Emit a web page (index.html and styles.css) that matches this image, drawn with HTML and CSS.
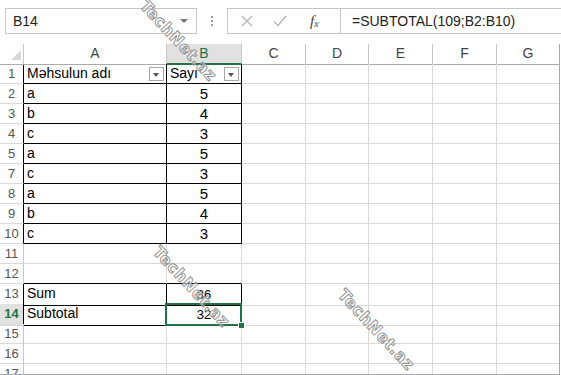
FILE: index.html
```html
<!DOCTYPE html>
<html lang="az">
<head>
<meta charset="UTF-8">
<meta name="viewport" content="width=device-width, initial-scale=1.0">
<title>SUBTOTAL</title>
<link rel="stylesheet" href="styles.css">
</head>
<body>
<div class="app">
  <div class="formula-row">
    <div class="name-box">
      <span>B14</span>
      <span class="caret"></span>
    </div>
    <div class="grip"><i></i><i></i><i></i></div>
    <div class="fx-buttons">
      <svg class="btn-icon" width="12" height="12" viewBox="0 0 12 12"><path d="M1 1L11 11M11 1L1 11" stroke="#b4b4b4" stroke-width="1.3" fill="none"/></svg>
      <svg class="btn-icon" width="14" height="12" viewBox="0 0 14 12"><path d="M1 6.5L5 10.5L13 1" stroke="#b4b4b4" stroke-width="1.3" fill="none"/></svg>
      <span class="fx">f<sub>x</sub></span>
    </div>
    <div class="formula">=SUBTOTAL(109;B2:B10)</div>
  </div>

  <div class="sheet">
    <div class="row head">
      <div class="corner"><span class="tri"></span></div>
      <div class="ch">A</div>
      <div class="ch active">B</div>
      <div class="ch">C</div>
      <div class="ch">D</div>
      <div class="ch">E</div>
      <div class="ch">F</div>
      <div class="ch last">G</div>
    </div>

    <div class="row">
      <div class="rh edge">1</div>
      <div class="c box filter"><span>Məhsulun adı</span><span class="drop"></span></div>
      <div class="c box filter"><span>Sayı</span><span class="drop"></span></div>
      <div class="c"></div><div class="c"></div><div class="c"></div><div class="c"></div><div class="c last"></div>
    </div>
    <div class="row">
      <div class="rh edge">2</div>
      <div class="c box">a</div><div class="c box num">5</div>
      <div class="c"></div><div class="c"></div><div class="c"></div><div class="c"></div><div class="c last"></div>
    </div>
    <div class="row">
      <div class="rh edge">3</div>
      <div class="c box">b</div><div class="c box num">4</div>
      <div class="c"></div><div class="c"></div><div class="c"></div><div class="c"></div><div class="c last"></div>
    </div>
    <div class="row">
      <div class="rh edge">4</div>
      <div class="c box">c</div><div class="c box num">3</div>
      <div class="c"></div><div class="c"></div><div class="c"></div><div class="c"></div><div class="c last"></div>
    </div>
    <div class="row">
      <div class="rh edge">5</div>
      <div class="c box">a</div><div class="c box num">5</div>
      <div class="c"></div><div class="c"></div><div class="c"></div><div class="c"></div><div class="c last"></div>
    </div>
    <div class="row">
      <div class="rh edge">7</div>
      <div class="c box">c</div><div class="c box num">3</div>
      <div class="c"></div><div class="c"></div><div class="c"></div><div class="c"></div><div class="c last"></div>
    </div>
    <div class="row">
      <div class="rh edge">8</div>
      <div class="c box">a</div><div class="c box num">5</div>
      <div class="c"></div><div class="c"></div><div class="c"></div><div class="c"></div><div class="c last"></div>
    </div>
    <div class="row">
      <div class="rh edge">9</div>
      <div class="c box">b</div><div class="c box num">4</div>
      <div class="c"></div><div class="c"></div><div class="c"></div><div class="c"></div><div class="c last"></div>
    </div>
    <div class="row">
      <div class="rh edge">10</div>
      <div class="c box">c</div><div class="c box num">3</div>
      <div class="c"></div><div class="c"></div><div class="c"></div><div class="c"></div><div class="c last"></div>
    </div>
    <div class="row">
      <div class="rh">11</div>
      <div class="c"></div><div class="c"></div>
      <div class="c"></div><div class="c"></div><div class="c"></div><div class="c"></div><div class="c last"></div>
    </div>
    <div class="row">
      <div class="rh">12</div>
      <div class="c above"></div><div class="c above"></div>
      <div class="c"></div><div class="c"></div><div class="c"></div><div class="c"></div><div class="c last"></div>
    </div>
    <div class="row">
      <div class="rh edge">13</div>
      <div class="c box">Sum</div><div class="c box num small">36</div>
      <div class="c"></div><div class="c"></div><div class="c"></div><div class="c"></div><div class="c last"></div>
    </div>
    <div class="row">
      <div class="rh edge active">14</div>
      <div class="c box">Subtotal</div><div class="c box num small selected">32<span class="handle"></span></div>
      <div class="c"></div><div class="c"></div><div class="c"></div><div class="c"></div><div class="c last"></div>
    </div>
    <div class="row">
      <div class="rh">15</div>
      <div class="c"></div><div class="c"></div>
      <div class="c"></div><div class="c"></div><div class="c"></div><div class="c"></div><div class="c last"></div>
    </div>
    <div class="row">
      <div class="rh">16</div>
      <div class="c"></div><div class="c"></div>
      <div class="c"></div><div class="c"></div><div class="c"></div><div class="c"></div><div class="c last"></div>
    </div>
    <div class="row">
      <div class="rh">17</div>
      <div class="c"></div><div class="c"></div>
      <div class="c"></div><div class="c"></div><div class="c"></div><div class="c"></div><div class="c last"></div>
    </div>
  </div>

  <span class="mark mark-1">TechNet.az</span>
  <span class="mark mark-2">TechNet.az</span>
  <span class="mark mark-3">TechNet.az</span>
</div>
</body>
</html>
```

FILE: styles.css
```css
body {
  margin: 0;
  padding: 0;
  background-color: #fff;
  font-family: "Liberation Sans", Arial, sans-serif;
  font-size: 14px;
  color: #000;
}
.app {
  position: relative;
  width: 561px;
  height: 375px;
  overflow: hidden;
}

/* formula bar */
.formula-row {
  display: flex;
  align-items: stretch;
  height: 26px;
  padding-top: 8px;
}
.name-box {
  display: flex;
  align-items: center;
  justify-content: space-between;
  width: 192px;
  margin-left: 5px;
  padding: 0 8px 0 7px;
  border: 1px solid #c6c6c6;
  box-sizing: border-box;
  color: #222;
}
.caret {
  width: 0;
  height: 0;
  border-left: 4px solid transparent;
  border-right: 4px solid transparent;
  border-top: 4px solid #777;
}
.grip {
  display: flex;
  flex-direction: column;
  align-items: center;
  justify-content: center;
  gap: 2px;
  width: 30px;
}
.grip i {
  width: 2px;
  height: 2px;
  background-color: #9a9a9a;
}
.fx-buttons {
  display: flex;
  align-items: center;
  width: 113px;
  padding-left: 13px;
  gap: 20px;
  border: 1px solid #c6c6c6;
  border-right: none;
  box-sizing: border-box;
}
.fx {
  margin-left: 3px;
  font-family: "Liberation Serif", serif;
  font-style: italic;
  font-size: 15px;
  color: #444;
}
.fx sub {
  font-size: 10px;
  vertical-align: -1px;
}
.formula {
  flex: 1;
  display: flex;
  align-items: center;
  padding-left: 11px;
  border: 1px solid #c6c6c6;
  border-right: none;
  color: #222;
}

/* grid */
.sheet {
  margin-top: 10px;
  width: 560px;
  height: 331px;
  overflow: hidden;
  border-right: 1px solid #a9a9a9;
  border-bottom: 1px solid #a9a9a9;
  box-sizing: border-box;
}
.row {
  display: grid;
  grid-template-columns: 24px 143px 75px 64px 63px 64px 64px 1fr;
  height: 20px;
}
.row > div {
  box-sizing: border-box;
  border-right: 1px solid #d9d9d9;
  border-bottom: 1px solid #d9d9d9;
  line-height: 19px;
  white-space: nowrap;
}
.row > .last {
  border-right: none;
}
.head > div {
  border-right-color: #c6c6c6;
  border-bottom-color: #ababab;
}
.corner {
  position: relative;
}
.tri {
  position: absolute;
  right: 2px;
  bottom: 4px;
  width: 0;
  height: 0;
  border-left: 10px solid transparent;
  border-bottom: 10px solid #d6d6d6;
}
.ch {
  text-align: center;
  color: #444;
}
.ch.active {
  background-color: #e1e1e1;
  color: #217346;
  border-bottom: 2px solid #217346 !important;
}
.rh {
  text-align: center;
  color: #555;
  font-size: 13px;
  border-right-color: #c6c6c6 !important;
}
.rh.edge {
  border-right-color: #000 !important;
}
.rh.active {
  background-color: #e1e1e1;
  color: #217346;
  font-weight: bold;
}
.row > .box {
  border-right-color: #000;
  border-bottom-color: #000;
  padding-left: 3px;
}
.row > .above {
  border-bottom-color: #000;
}
.row > .num {
  text-align: center;
  padding-left: 0;
  font-size: 15px;
}
.row > .small {
  font-size: 13px;
  line-height: 21px;
}
.filter {
  display: flex;
  align-items: center;
  padding-right: 2px;
}
.drop {
  position: relative;
  width: 15px;
  height: 14px;
  margin-left: auto;
  border: 1px solid #a6a6a6;
  box-sizing: border-box;
  background-color: #fff;
}
.drop::after {
  content: "";
  position: absolute;
  left: 3px;
  top: 5px;
  border-left: 3.5px solid transparent;
  border-right: 3.5px solid transparent;
  border-top: 4px solid #555;
}
.selected {
  position: relative;
}
.selected::before {
  content: "";
  position: absolute;
  left: -2px;
  top: -1px;
  right: -1px;
  bottom: -1px;
  border: 2px solid #217346;
}
.handle {
  position: absolute;
  right: -4px;
  bottom: -4px;
  width: 5px;
  height: 5px;
  background-color: #217346;
  border: 1px solid #fff;
}

/* watermark */
.mark {
  position: absolute;
  width: 120px;
  line-height: 18px;
  text-align: center;
  font-family: "DejaVu Sans", sans-serif;
  font-size: 16px;
  font-weight: bold;
  letter-spacing: 0.5px;
  color: rgba(255, 255, 255, 0.5);
  -webkit-text-stroke: 0.9px #8c8c8c;
  transform: rotate(47deg);
  pointer-events: none;
}
.mark-1 {
  left: 118px;
  top: 32px;
}
.mark-2 {
  left: 131px;
  top: 278px;
}
.mark-3 {
  left: 316px;
  top: 321px;
}
```
